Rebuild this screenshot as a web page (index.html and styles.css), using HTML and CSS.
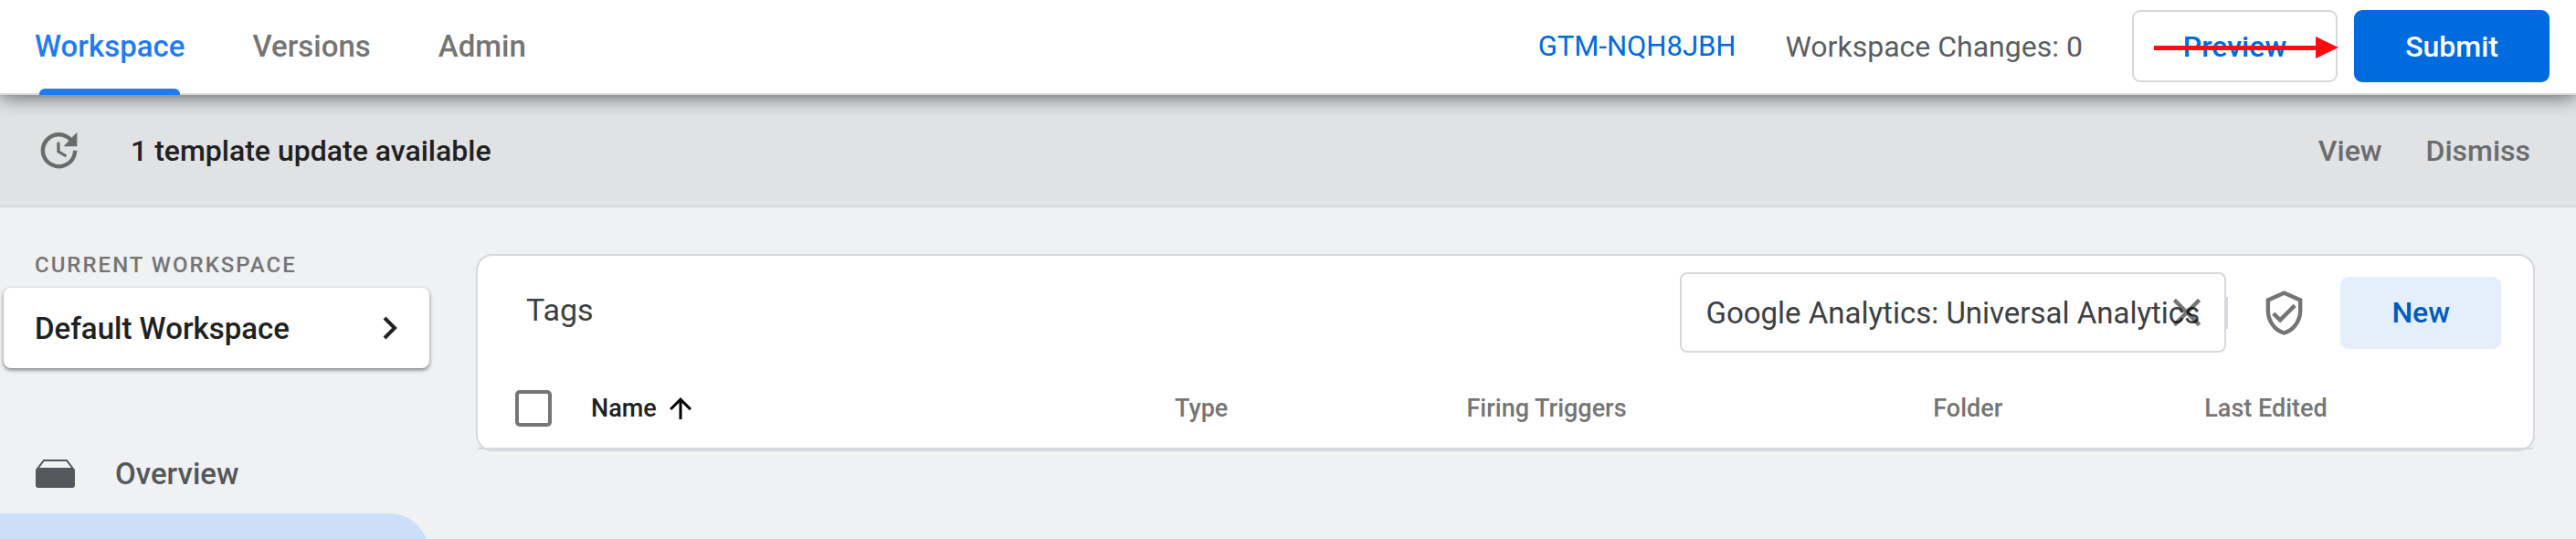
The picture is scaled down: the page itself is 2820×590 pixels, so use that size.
FILE: index.html
```html
<!DOCTYPE html>
<html lang="en">
<head>
    <meta charset="UTF-8">
    <meta name="viewport" content="width=device-width, initial-scale=1.0">
    <title>Tag Manager - Tags</title>
    <link rel="stylesheet" href="styles.css">
</head>
<body>

<header class="topbar">
    <nav class="tabs">
        <a href="#" class="tab active">Workspace</a>
        <a href="#" class="tab">Versions</a>
        <a href="#" class="tab">Admin</a>
    </nav>
    <div class="topbar-right">
        <a href="#" class="container-id">GTM-NQH8JBH</a>
        <span class="changes">Workspace Changes: 0</span>
        <div class="preview">
            <button class="btn btn-outline">Preview</button>
            <svg class="arrow" viewBox="0 0 202 24" aria-hidden="true">
                <path d="M0 10h177V0l25 12-25 12V15H0z" fill="#ff0b12"/>
            </svg>
        </div>
        <button class="btn btn-primary">Submit</button>
    </div>
</header>

<div class="notice">
    <svg class="icon icon-update" viewBox="0 0 24 24" aria-hidden="true">
        <path d="M21 10.12h-6.78l2.74-2.82c-2.73-2.7-7.15-2.8-9.88-.1-2.73 2.71-2.73 7.08 0 9.79s7.15 2.71 9.88 0C18.32 15.65 19 14.08 19 12.1h2c0 1.98-.88 4.55-2.64 6.29-3.51 3.48-9.21 3.48-12.72 0-3.5-3.47-3.53-9.11-.02-12.58s9.14-3.47 12.65 0L21 3v7.12zM12.5 8v4.25l3.5 2.08-.72 1.21L11 13V8h1.5z"/>
    </svg>
    <span class="notice-text">1 template update available</span>
    <div class="notice-actions">
        <button class="link-btn">View</button>
        <button class="link-btn">Dismiss</button>
    </div>
</div>

<div class="layout">
    <aside class="sidebar">
        <div class="sidebar-label">CURRENT WORKSPACE</div>
        <button class="workspace-picker">
            <span>Default Workspace</span>
            <svg class="icon icon-chevron" viewBox="0 0 17 26" aria-hidden="true">
                <path d="M2 2l11 11L2 24" fill="none" stroke="#212121" stroke-width="4"/>
            </svg>
        </button>
        <nav class="menu">
            <a href="#" class="menu-item">
                <svg class="icon-overview" viewBox="0 0 43 31" aria-hidden="true">
                    <path d="M2 10L9 1h25l7 9" fill="none" stroke="#54575c" stroke-width="2"/>
                    <path d="M0 11l2-2h39l2 2v17a3 3 0 0 1-3 3H3a3 3 0 0 1-3-3z" fill="#54575c"/>
                </svg>
                <span>Overview</span>
            </a>
            <a href="#" class="menu-item selected" aria-label="Tags"></a>
        </nav>
    </aside>

    <main class="card">
        <div class="card-header">
            <h1>Tags</h1>
            <div class="search">
                <input type="text" class="search-input" value="Google Analytics: Universal Analytics" aria-label="Search tags">
                <button class="search-clear" aria-label="Clear search">
                    <svg viewBox="0 0 24 24" aria-hidden="true">
                        <path d="M19 6.41L17.59 5 12 10.59 6.41 5 5 6.41 10.59 12 5 17.59 6.41 19 12 13.41 17.59 19 19 17.59 13.41 12z"/>
                    </svg>
                </button>
            </div>
            <span class="divider"></span>
            <button class="icon-btn" aria-label="Tag coverage">
                <svg class="icon" viewBox="0 0 24 24" aria-hidden="true">
                    <path d="M12 1L3 5v6c0 5.55 3.84 10.74 9 12 5.16-1.26 9-6.45 9-12V5l-9-4zm7 10c0 4.52-2.98 8.69-7 9.93-4.02-1.24-7-5.41-7-9.93V6.3l7-3.11 7 3.11V11zm-11.59.59L6 13l4 4 8-8-1.41-1.42L10 14.17z"/>
                </svg>
            </button>
            <button class="btn btn-new">New</button>
        </div>

        <table class="tags">
            <thead>
                <tr>
                    <th class="col-check"><input type="checkbox" class="checkbox" aria-label="Select all tags"></th>
                    <th class="col-name">
                        <span class="sorted">Name
                            <svg class="icon-sort" viewBox="0 0 24 24" aria-hidden="true">
                                <path d="M4 12l1.41 1.41L11 7.83V20h2V7.83l5.58 5.59L20 12l-8-8-8 8z"/>
                            </svg>
                        </span>
                    </th>
                    <th class="col-type">Type</th>
                    <th class="col-triggers">Firing Triggers</th>
                    <th class="col-folder">Folder</th>
                    <th class="col-edited">Last Edited</th>
                </tr>
            </thead>
        </table>
    </main>
</div>

</body>
</html>
```

FILE: styles.css
```css
* {
    box-sizing: border-box;
}
body {
    font-family: Roboto, Arial, sans-serif;
    font-size: 32px;
    margin: 0;
    background-color: #eff1f3;
    color: #212121;
    height: 100vh;
    display: flex;
    flex-direction: column;
}
a {
    text-decoration: none;
}
button,
input {
    font-family: inherit;
    font-size: inherit;
    margin: 0;
    padding: 0;
}
button {
    background: none;
    border: none;
    cursor: pointer;
}
svg {
    display: block;
}

/* top bar */
.topbar {
    position: relative;
    z-index: 1;
    flex-shrink: 0;
    display: flex;
    justify-content: space-between;
    height: 104px;
    padding: 0 29px 1px 38px;
    background-color: #ffffff;
    border-bottom: 2px solid #d5d9dc;
    box-shadow: 0 2px 20px rgba(0, 0, 0, 0.6);
}
.tabs {
    display: flex;
    gap: 74px;
    font-size: 33px;
}
.tab {
    position: relative;
    display: flex;
    align-items: center;
    color: #757575;
    font-weight: 500;
}
.tab.active {
    color: #1f7cf0;
}
.tab.active::after {
    content: "";
    position: absolute;
    left: 5px;
    right: 5px;
    bottom: -3px;
    height: 7px;
    border-radius: 6px 6px 0 0;
    background-color: #1f7cf0;
}
.topbar-right {
    display: flex;
    align-items: center;
}
.container-id {
    color: #006adf;
    font-size: 31px;
    margin-right: 54px;
}
.changes {
    color: #5a5d62;
    margin-right: 54px;
}
.btn {
    height: 79px;
    padding: 0 56px;
    border-radius: 9px;
    font-weight: 500;
}
.preview {
    position: relative;
    margin-right: 18px;
}
.btn-outline {
    display: block;
    padding: 0 54px;
    border: 2px solid #d5d8dd;
    color: #006adf;
}
.btn-primary {
    background-color: #006adf;
    color: #ffffff;
}
.arrow {
    position: absolute;
    top: 29px;
    right: -1px;
    width: 202px;
}

/* update notice */
.notice {
    flex-shrink: 0;
    display: flex;
    align-items: center;
    height: 123px;
    padding: 0 50px 0 38px;
    background-color: #e1e2e4;
    border-bottom: 2px solid #d5d8dd;
}
.icon {
    width: 53px;
    height: 53px;
    fill: #757575;
}
.icon-update {
    fill: #6b6c6c;
}
.notice-text {
    margin-left: 52px;
    font-weight: 500;
}
.notice-actions {
    display: flex;
    gap: 48px;
    margin-left: auto;
}
.link-btn {
    color: #6b6c6c;
    font-weight: 500;
}

/* page body */
.layout {
    flex: 1;
    min-height: 0;
    display: flex;
    align-items: flex-start;
    gap: 51px;
    padding: 51px 45px 0 4px;
    overflow: hidden;
}
.sidebar {
    flex: 0 0 466px;
}
.sidebar-label {
    padding: 0 34px;
    font-size: 24px;
    line-height: 24px;
    font-weight: 500;
    letter-spacing: 2px;
    color: #757575;
}
.workspace-picker {
    display: flex;
    justify-content: space-between;
    align-items: center;
    width: 100%;
    height: 88px;
    margin-top: 13px;
    padding: 0 34px;
    border-radius: 8px;
    background-color: #ffffff;
    box-shadow: 0 2px 4px rgba(0, 0, 0, 0.5);
    color: #212121;
    font-size: 33px;
    font-weight: 500;
}
.icon-chevron {
    width: 17px;
    height: 26px;
}
.menu {
    margin: 71px 0 0 -4px;
}
.menu-item {
    display: flex;
    align-items: center;
    gap: 44px;
    height: 88px;
    padding: 0 39px;
    border-radius: 0 44px 44px 0;
    color: #54575c;
    font-size: 33px;
    font-weight: 500;
}
.menu-item.selected {
    background-color: #cbdff9;
}
.icon-overview {
    width: 43px;
    height: 31px;
}

/* tags card */
.card {
    flex: 1;
    border: 2px solid #d5d8dd;
    border-radius: 18px;
    background-color: #ffffff;
}
.card-header {
    display: flex;
    align-items: center;
    height: 124px;
    padding: 0 35px 0 53px;
}
h1 {
    margin: 0 auto 0 0;
    padding-bottom: 6px;
    font-size: 34px;
    font-weight: 400;
    color: #3c4043;
}
.search {
    position: relative;
    width: 598px;
}
.search-input {
    display: block;
    width: 100%;
    height: 88px;
    padding: 0 26px;
    border: 2px solid #d5d8dd;
    border-radius: 8px;
    background-color: #ffffff;
    color: #3c4043;
    font-size: 33px;
}
.search-clear {
    position: absolute;
    top: 18px;
    right: 17px;
    width: 52px;
    height: 52px;
    opacity: 0.54;
}
.divider {
    width: 2px;
    height: 35px;
    background-color: #d5d8dd;
}
.icon-btn {
    margin: 0 35px;
}
.btn-new {
    background-color: #e5effb;
    color: #005bc0;
}
.tags {
    width: 100%;
    table-layout: fixed;
    border-collapse: collapse;
    border-bottom: 2px solid #d5d8dd;
}
.tags th {
    height: 87px;
    padding: 0;
    font-size: 27px;
    font-weight: 500;
    text-align: left;
    color: #757575;
}
.tags .col-check {
    width: 124px;
    padding-left: 41px;
}
.tags .col-name {
    width: 28.4%;
    color: #212121;
}
.col-type {
    width: 14.2%;
}
.col-triggers {
    width: 22.7%;
}
.col-folder {
    width: 13.2%;
}
.checkbox {
    display: block;
    appearance: none;
    width: 40px;
    height: 40px;
    border: 4px solid #757575;
    border-radius: 5px;
}
.sorted {
    display: flex;
    align-items: center;
    gap: 8px;
}
.icon-sort {
    width: 36px;
    height: 36px;
}
```
